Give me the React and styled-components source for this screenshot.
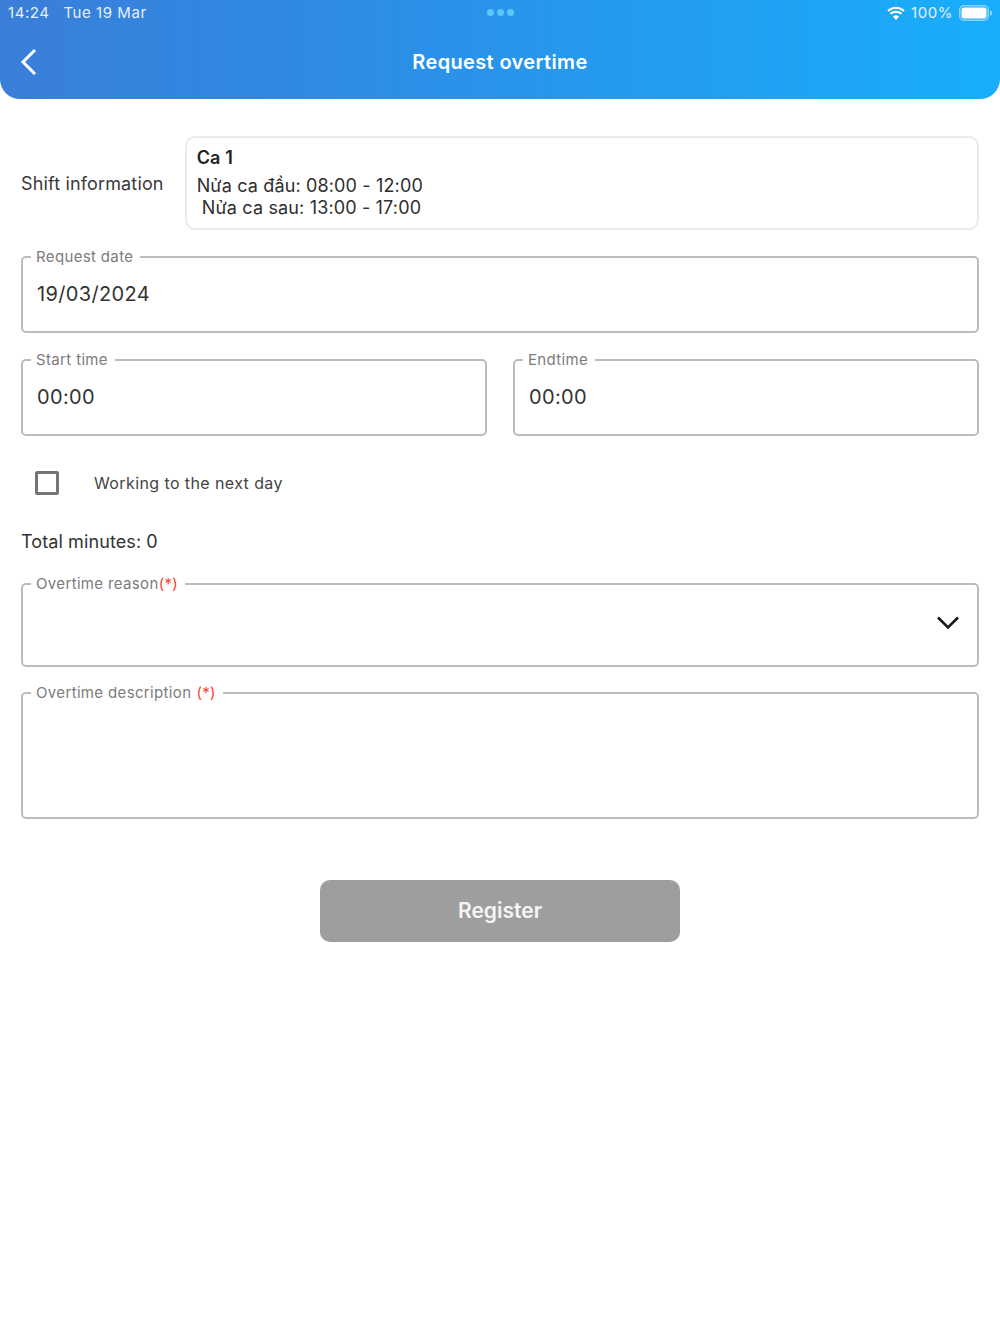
import React from "react"
import styled, { createGlobalStyle } from "styled-components"

const GlobalStyle = createGlobalStyle`
  html, body {
    margin: 0;
    padding: 0;
    background: #fff;
    font-family: Inter, "Noto Sans", sans-serif;
  }
`

const Page = styled.div`
  width: 1000px;
  height: 1334px;
  overflow: hidden;
  background: #fff;
`

const Header = styled.header`
  height: 99px;
  box-sizing: border-box;
  border-radius: 0 0 20px 20px;
  background: linear-gradient(90deg, #3a7ed9 0%, #2f8ae3 30%, #18aefb 100%);
  color: #fff;
`

const StatusBar = styled.div`
  height: 25px;
  display: grid;
  grid-template-columns: 1fr auto 1fr;
  align-items: center;
  padding: 0 8px;
  font-size: 15px;
  letter-spacing: 0.55px;
  color: #e6f0fb;
`

const StatusLeft = styled.div`
  display: flex;
  gap: 14px;
`

const Dots = styled.div`
  display: flex;
  gap: 3px;
`

const Dot = styled.span`
  width: 7px;
  height: 7px;
  border-radius: 50%;
  background: #5cc6fb;
`

const StatusRight = styled.div`
  display: flex;
  align-items: center;
  justify-content: flex-end;
  gap: 6px;
`

const NavBar = styled.div`
  height: 74px;
  position: relative;
  display: flex;
  align-items: center;
  justify-content: center;
`

const BackButton = styled.button`
  position: absolute;
  left: 19px;
  top: 22px;
  width: 22px;
  height: 30px;
  padding: 0;
  border: 0;
  background: none;
`

const Title = styled.h1`
  margin: 0;
  font-size: 20px;
  font-weight: 600;
  letter-spacing: 0.35px;
  color: #fff;
`

const Form = styled.main`
  padding: 37px 21px 0;
  display: flex;
  flex-direction: column;
`

const ShiftRow = styled.div`
  display: flex;
  align-items: center;
  gap: 21px;
`

const ShiftLabel = styled.div`
  font-size: 18px;
  color: #3a3a3a;
  letter-spacing: 0.15px;
  white-space: nowrap;
`

const ShiftCard = styled.div`
  flex: 1;
  height: 94px;
  box-sizing: border-box;
  padding: 7px 10px;
  border: 2px solid #eaebf0;
  border-radius: 10px;
  color: #2e2e2e;
  font-size: 18px;
  white-space: pre;
  letter-spacing: 0.15px;
`

const ShiftName = styled.div`
  font-weight: 600;
  color: #222;
  line-height: 26px;
`

const ShiftLine = styled.div`
  line-height: 20px;
  margin-top: ${(p) => p.$gap}px;
`

const FieldBox = styled.fieldset`
  flex: ${(p) => (p.$half ? "1" : "none")};
  min-width: 0;
  margin: ${(p) => p.$top}px 0 0;
  height: ${(p) => p.$height}px;
  box-sizing: border-box;
  padding: 0 14px;
  border: 2px solid #bcbcbc;
  border-radius: 5px;
  position: relative;
`

const FieldLegend = styled.legend`
  margin-left: -6px;
  padding: 1px 7px 0 5px;
  font-size: 15px;
  line-height: 18px;
  color: #7c7c7c;
  letter-spacing: 0.35px;
  white-space: pre;
`

const Required = styled.span`
  margin-left: ${(p) => (p.$spaced ? 5 : 0)}px;
  color: #f44336;
`

const FieldValue = styled.div`
  font-size: 20px;
  line-height: 28px;
  margin-top: 14px;
  color: #333;
  letter-spacing: 0.35px;
`

const Chevron = styled.svg`
  position: absolute;
  right: 17px;
  top: 22px;
`

const TimeRow = styled.div`
  display: flex;
  gap: 26px;
`

const CheckRow = styled.label`
  display: flex;
  align-items: center;
  gap: 35px;
  margin-top: 35px;
  padding-left: 14px;
  font-size: 16px;
  line-height: 24px;
  color: #444;
  letter-spacing: 0.4px;
`

const CheckBox = styled.span`
  width: 24px;
  height: 24px;
  box-sizing: border-box;
  border: 3px solid #757575;
  border-radius: 2px;
`

const TotalMinutes = styled.div`
  margin-top: 35px;
  font-size: 18px;
  line-height: 24px;
  color: #333;
  letter-spacing: 0.1px;
`

const RegisterButton = styled.button`
  align-self: center;
  width: 360px;
  height: 62px;
  margin-top: 61px;
  padding: 0 0 2px;
  border: 0;
  border-radius: 10px;
  background: #9e9e9e;
  color: #f5f5f5;
  font-family: inherit;
  font-size: 21px;
  font-weight: 600;
`

const Field = ({ label, required, spaced, half, top, height, value, children }) => (
  <FieldBox $half={half} $top={top} $height={height}>
    <FieldLegend>
      {label}
      {required && <Required $spaced={spaced}>(*)</Required>}
    </FieldLegend>
    {value && <FieldValue>{value}</FieldValue>}
    {children}
  </FieldBox>
)

const App = () => (
  <Page>
    <GlobalStyle />
    <Header>
      <StatusBar>
        <StatusLeft>
          <span>14:24</span>
          <span>Tue 19 Mar</span>
        </StatusLeft>
        <Dots>
          <Dot />
          <Dot />
          <Dot />
        </Dots>
        <StatusRight>
          <svg width="18" height="14" viewBox="0 0 18 14">
            <path d="M1 5a11.5 11.5 0 0 1 16 0M3.6 7.8a7.8 7.8 0 0 1 10.8 0" fill="none" stroke="#fff" strokeWidth="2" />
            <path d="M9 14l-3-3.2a4.3 4.3 0 0 1 6 0z" fill="#fff" />
          </svg>
          <span>100%</span>
          <svg width="33" height="16" viewBox="0 0 33 16">
            <rect x="0.75" y="0.75" width="28.5" height="14.5" rx="4" fill="none" stroke="#8fd3fb" strokeWidth="1.5" />
            <rect x="2.5" y="2.5" width="25" height="11" rx="2.5" fill="#fff" />
            <path d="M31 5.5a2.5 2.5 0 0 1 0 5z" fill="#8fd3fb" />
          </svg>
        </StatusRight>
      </StatusBar>
      <NavBar>
        <BackButton aria-label="Back">
          <svg width="22" height="30" viewBox="0 0 22 30">
            <path d="M16 3L4 15l12 12" fill="none" stroke="#fff" strokeWidth="3" />
          </svg>
        </BackButton>
        <Title>Request overtime</Title>
      </NavBar>
    </Header>
    <Form>
      <ShiftRow>
        <ShiftLabel>Shift information</ShiftLabel>
        <ShiftCard>
          <ShiftName>Ca 1</ShiftName>
          <ShiftLine $gap={5}>Nửa ca đầu: 08:00 - 12:00</ShiftLine>
          <ShiftLine $gap={2}> Nửa ca sau: 13:00 - 17:00</ShiftLine>
        </ShiftCard>
      </ShiftRow>
      <Field label="Request date" top={17} height={86} value="19/03/2024" />
      <TimeRow>
        <Field half label="Start time" top={17} height={86} value="00:00" />
        <Field half label="Endtime" top={17} height={86} value="00:00" />
      </TimeRow>
      <CheckRow>
        <CheckBox />
        Working to the next day
      </CheckRow>
      <TotalMinutes>Total minutes: 0</TotalMinutes>
      <Field required label="Overtime reason" top={20} height={93}>
        <Chevron width="24" height="16" viewBox="0 0 24 16">
          <path d="M2 2.5l10 10 10-10" fill="none" stroke="#1a1a1a" strokeWidth="2.6" />
        </Chevron>
      </Field>
      <Field required spaced label="Overtime description" top={16} height={136} />
      <RegisterButton>Register</RegisterButton>
    </Form>
  </Page>
)

export default App
